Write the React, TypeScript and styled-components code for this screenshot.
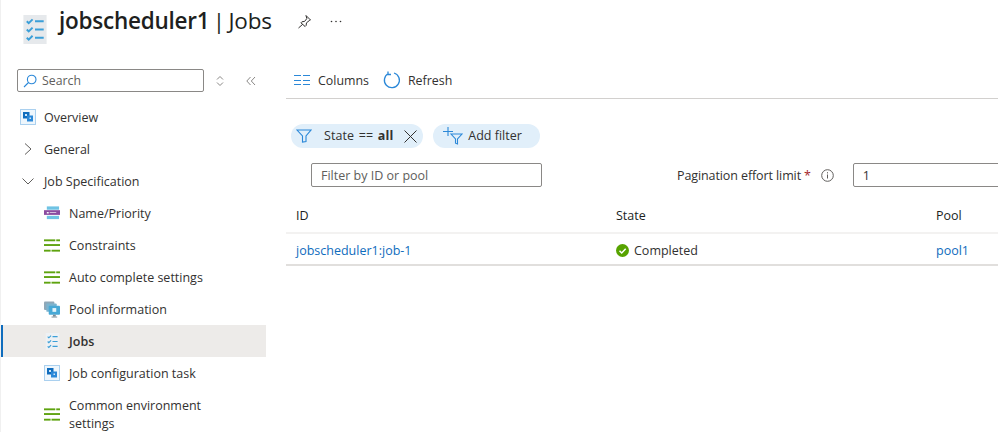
import React from 'react';
import styled, { createGlobalStyle } from 'styled-components';

const GlobalStyle = createGlobalStyle`
  html, body {
    margin: 0;
    padding: 0;
    background: #fff;
    overflow: hidden;
  }
  body {
    font-family: "Open Sans", "Noto Sans", "Liberation Sans", sans-serif;
    color: #323130;
  }
  * {
    box-sizing: border-box;
  }
`;

const Page = styled.div`
  width: 998px;
  height: 432px;
  overflow: hidden;
  display: flex;
  flex-direction: column;
  border-left: 1px solid #f0f0f0;
`;

const Header = styled.header`
  height: 63px;
  display: flex;
  align-items: flex-start;
  padding: 15px 0 0 22px;
`;

const Title = styled.h1`
  margin: -10px 0 0 12px;
  font-size: 22.5px;
  line-height: 32px;
  font-weight: 400;
  color: #201f1e;
  letter-spacing: -0.25px;
  word-spacing: -2px;
  white-space: nowrap;

  strong {
    font-weight: 600;
  }
`;

const HeaderAction = styled.span<{ $gap: number }>`
  display: flex;
  margin-left: ${(p) => p.$gap}px;
  margin-top: -1px;
`;

const Body = styled.div`
  flex: 1;
  display: flex;
  min-height: 0;
`;

const Sidebar = styled.nav`
  width: 265px;
  flex: none;
  display: flex;
  flex-direction: column;
`;

const SearchRow = styled.div`
  height: 38px;
  flex: none;
  display: flex;
  align-items: flex-start;
  padding: 6px 0 0 16px;
`;

const SearchBox = styled.div`
  width: 187px;
  height: 23px;
  display: flex;
  align-items: center;
  gap: 5px;
  padding-left: 5px;
  border: 1px solid #8a8886;
  border-radius: 2px;
  font-size: 12.3px;
  color: #605e5c;
`;

const SearchTool = styled.span<{ $gap: number }>`
  display: flex;
  height: 23px;
  align-items: center;
  margin-left: ${(p) => p.$gap}px;
`;

const NavRow = styled.div<{ $indent: number; $gap?: number; $active?: boolean }>`
  height: 32px;
  flex: none;
  display: flex;
  align-items: center;
  gap: ${(p) => p.$gap ?? 8}px;
  padding-left: ${(p) => p.$indent}px;
  font-size: 12.5px;
  font-weight: ${(p) => (p.$active ? 600 : 400)};
  background: ${(p) => (p.$active ? '#edebe9' : 'transparent')};
  box-shadow: ${(p) => (p.$active ? 'inset 2px 0 0 #0f6cbd' : 'none')};
  line-height: 18px;
`;

const NavTall = styled(NavRow)`
  height: 50px;
`;

const NavLabel = styled.span`
  padding-top: 2px;
`;

const NavIcon = styled.span`
  width: 16px;
  height: 16px;
  flex: none;
  display: flex;
  align-items: center;
  justify-content: center;
`;

const Main = styled.main`
  flex: 1;
  min-width: 0;
  padding-left: 20px;
  display: flex;
  flex-direction: column;
`;

const Toolbar = styled.div`
  height: 36px;
  flex: none;
  display: flex;
  align-items: flex-start;
  padding: 5px 0 0 8px;
  border-bottom: 1px solid #d2d0ce;
  font-size: 12.4px;
`;

const ToolButton = styled.div<{ $gap: number }>`
  display: flex;
  align-items: center;
  height: 24px;
  gap: ${(p) => p.$gap}px;
  margin-right: 14px;
`;

const Chips = styled.div`
  display: flex;
  gap: 10px;
  margin: 25px 0 0 5px;
`;

const Chip = styled.div<{ $pad: string }>`
  height: 24px;
  border-radius: 12px;
  background: #e1effa;
  display: flex;
  align-items: center;
  font-size: 12.5px;
  padding: ${(p) => p.$pad};

  b {
    font-weight: 700;
  }
`;

const ChipLabel = styled.span<{ $gap: number; $spaced?: boolean }>`
  margin-left: ${(p) => p.$gap}px;
  padding-bottom: 2px;
  word-spacing: ${(p) => (p.$spaced ? 1.2 : 0)}px;
  letter-spacing: ${(p) => (p.$spaced ? 0.1 : 0)}px;
`;

const FilterRow = styled.div`
  display: flex;
  align-items: center;
  margin: 15px 0 0 25px;
  font-size: 12.5px;
`;

const TextField = styled.div<{ $width: number; $muted?: boolean }>`
  width: ${(p) => p.$width}px;
  height: 24px;
  flex: none;
  display: flex;
  align-items: center;
  padding-left: 9px;
  border: 1px solid #8a8886;
  border-radius: 2px;
  color: ${(p) => (p.$muted ? '#605e5c' : '#323130')};
`;

const PaginationLabel = styled.span`
  margin-left: 135px;
  white-space: nowrap;
  letter-spacing: -0.1px;
`;

const Required = styled.span`
  color: #a4262c;
  margin-left: 3px;
`;

const InfoIcon = styled.span`
  display: flex;
  margin: 0 19px 0 10px;
`;

const Row = styled.div<{ $height: number; $line: string }>`
  height: ${(p) => p.$height}px;
  display: grid;
  grid-template-columns: 320px 320px 1fr;
  align-items: center;
  padding-left: 10px;
  border-bottom: 2px solid ${(p) => p.$line};
  font-size: 12.5px;
`;

const HeadRow = styled(Row)`
  margin-top: 14px;
  padding-bottom: 2px;
  color: #201f1e;
  font-weight: 500;
`;

const DataRow = styled(Row)`
  padding-top: 2px;
`;

const CellLink = styled.a`
  color: #0f6cbd;
  font-weight: 500;
`;

const StateCell = styled.div`
  display: flex;
  align-items: center;
  gap: 5px;
`;

const ChecklistIcon = ({ size, bg }: { size: [number, number]; bg: string }) => (
  <svg width={size[0]} height={size[1]} viewBox="0 0 24 30">
    <rect width="24" height="30" fill={bg} />
    <g fill="none" stroke="#3b9fd8" strokeWidth="2">
      <path d="M3.500 6.500l2 2 4-4M3.500 15l2 2 4-4M3.500 23.500l2 2 4-4" />
      <path d="M12 6.500h9M12 15h9M12 23.500h9" />
    </g>
  </svg>
);

const ServiceIcon = () => (
  <svg width="16" height="16" viewBox="0 0 16 16">
    <rect x="0.500" y="0.500" width="15" height="15" fill="#eef6fc" stroke="#5ea7e0" strokeDasharray="1 1" />
    <rect x="3" y="3" width="6.500" height="6.500" fill="#0f6cbd" />
    <rect x="7" y="6.500" width="6" height="6" fill="#2b88d8" />
    <rect x="5" y="5" width="2" height="2" fill="#cfe6f8" />
    <rect x="9.500" y="8.500" width="1.500" height="1.500" fill="#cfe6f8" />
  </svg>
);

const LinesIcon = () => (
  <svg width="17" height="13" viewBox="0 0 17 13">
    <g fill="#5ea30f">
      <rect y="0" width="12" height="2" />
      <rect x="13" y="0" width="4" height="2" />
      <rect y="5" width="17" height="2" />
      <rect y="11" width="7" height="2" />
      <rect x="8" y="11" width="9" height="2" />
    </g>
  </svg>
);

const NamePriorityIcon = () => (
  <svg width="17" height="14" viewBox="0 0 17 14">
    <rect x="3" y="0" width="13" height="3.500" fill="#6fc3e4" />
    <rect x="0" y="4" width="17" height="5" fill="#8a4ba0" />
    <rect x="3" y="10" width="13" height="3.500" fill="#6fc3e4" />
    <rect x="3" y="6" width="2" height="1.500" fill="#fff" />
    <rect x="6" y="6" width="7" height="1" fill="#d8c4e0" />
  </svg>
);

const PoolIcon = () => (
  <svg width="17" height="17" viewBox="0 0 17 17">
    <rect x="0" y="0" width="11" height="9" rx="1" fill="#8fa8b8" />
    <rect x="2.500" y="2" width="11" height="9" rx="1" fill="#7cb4cf" />
    <rect x="5" y="4.500" width="12" height="9.500" rx="1" fill="#48a9d6" />
    <rect x="9.500" y="14" width="3" height="2" fill="#7a8b96" />
    <rect x="8" y="16" width="6" height="1" fill="#7a8b96" />
    <rect x="9" y="7" width="4" height="4" fill="#e6f4fb" />
  </svg>
);

const StrokeIcon = ({ w, h, color = '#605e5c', sw = 1, d }: { w: number; h: number; color?: string; sw?: number; d: string }) => (
  <svg width={w} height={h} viewBox={`0 0 ${w} ${h}`} fill="none" stroke={color} strokeWidth={sw}>
    <path d={d} />
  </svg>
);

const navItems = [
  { label: 'Name/Priority', icon: <NamePriorityIcon /> },
  { label: 'Constraints', icon: <LinesIcon /> },
  { label: 'Auto complete settings', icon: <LinesIcon /> },
  { label: 'Pool information', icon: <PoolIcon /> },
  { label: 'Jobs', icon: <ChecklistIcon size={[15, 17]} bg="#eef1f4" />, active: true },
  { label: 'Job configuration task', icon: <ServiceIcon /> },
];

export default function App() {
  return (
    <>
      <GlobalStyle />
      <Page>
        <Header>
          <ChecklistIcon size={[24, 29]} bg="#e6e9ec" />
          <Title>
            <strong>jobscheduler1</strong> | Jobs
          </Title>
          <HeaderAction $gap={25}>
            <StrokeIcon w={15} h={15} color="#323130" d="M9 1.500l4.500 4.500-1.200.6-2.800 2.200-.4 2.700-1 1L3.900 8.800l1-1 2.700-.4 2.200-2.800zM5.800 10.200L1.500 14" />
          </HeaderAction>
          <HeaderAction $gap={18}>
            <svg width="12" height="15" viewBox="0 0 12 15" fill="#323130">
              <circle cx="1.500" cy="7.500" r="0.800" />
              <circle cx="6" cy="7.500" r="0.800" />
              <circle cx="10.500" cy="7.500" r="0.800" />
            </svg>
          </HeaderAction>
        </Header>
        <Body>
          <Sidebar>
            <SearchRow>
              <SearchBox>
                <StrokeIcon w={14} h={14} color="#2b88d8" sw={1.1} d="M13 5.500a4.300 4.300 0 1 1-8.600 0 4.300 4.300 0 0 1 8.600 0zM5.500 8.500L1 13" />
                Search
              </SearchBox>
              <SearchTool $gap={12}>
                <StrokeIcon w={8} h={12} color="#8a8886" d="M1 4.500L4 1.500l3 3M1 7.500l3 3 3-3" />
              </SearchTool>
              <SearchTool $gap={22}>
                <StrokeIcon w={10} h={10} color="#8a8886" d="M4.500 1L.8 5l3.700 4M9 1L5.300 5 9 9" />
              </SearchTool>
            </SearchRow>
            <NavRow $indent={19}>
              <NavIcon>
                <ServiceIcon />
              </NavIcon>
              <NavLabel>Overview</NavLabel>
            </NavRow>
            <NavRow $indent={19}>
              <NavIcon>
                <StrokeIcon w={10} h={14} color="#605e5c" d="M2 1.500L8 7l-6 5.500" />
              </NavIcon>
              <NavLabel>General</NavLabel>
            </NavRow>
            <NavRow $indent={19}>
              <NavIcon>
                <StrokeIcon w={14} h={9} color="#605e5c" d="M1.500 1.500L7 7l5.500-5.500" />
              </NavIcon>
              <NavLabel>Job Specification</NavLabel>
            </NavRow>
            {navItems.map((item) => (
              <NavRow key={item.label} $indent={43} $gap={9} $active={item.active}>
                <NavIcon>{item.icon}</NavIcon>
                <NavLabel>{item.label}</NavLabel>
              </NavRow>
            ))}
            <NavTall $indent={43} $gap={9}>
              <NavIcon>
                <LinesIcon />
              </NavIcon>
              <NavLabel>
                Common environment
                <br />
                settings
              </NavLabel>
            </NavTall>
          </Sidebar>
          <Main>
            <Toolbar>
              <ToolButton $gap={8}>
                <StrokeIcon w={16} h={12} color="#2b88d8" sw={1.2} d="M0 1.500h7M9 1.500h7M0 6.500h7M9 6.500h7M0 10.500h7M9 10.500h7" />
                Columns
              </ToolButton>
              <ToolButton $gap={7}>
                <StrokeIcon w={18} h={18} color="#2b88d8" sw={1.3} d="M5.500 2.500A7.500 7.500 0 1 0 11 2M5 .5v3h3" />
                Refresh
              </ToolButton>
            </Toolbar>
            <Chips>
              <Chip $pad="0 6px 0 5px">
                <StrokeIcon w={16} h={14} color="#2b88d8" sw={1.1} d="M1 1h14L10 7v5.500L6.500 13V7z" />
                <ChipLabel $gap={12} $spaced>
                  State == <b>all</b>
                </ChipLabel>
                <StrokeIcon w={24} h={13} color="#323130" d="M11.500 .5l12 12M23.500 .5l-12 12" />
              </Chip>
              <Chip $pad="0 18px 0 10px">
                <StrokeIcon w={20} h={18} color="#2b88d8" sw={1.1} d="M5 0v9M0 4.500h10M8 7h11l-4.500 5v5l-2-.8V12z" />
                <ChipLabel $gap={5}>Add filter</ChipLabel>
              </Chip>
            </Chips>
            <FilterRow>
              <TextField $width={231} $muted>
                Filter by ID or pool
              </TextField>
              <PaginationLabel>
                Pagination effort limit
                <Required>*</Required>
              </PaginationLabel>
              <InfoIcon>
                <svg width="13" height="13" viewBox="0 0 13 13" fill="none" stroke="#605e5c">
                  <circle cx="6.500" cy="6.500" r="5.800" />
                  <path d="M6.500 5.500v4M6.500 3.200v1.200" />
                </svg>
              </InfoIcon>
              <TextField $width={160}>1</TextField>
            </FilterRow>
            <HeadRow $height={33} $line="#f3f2f1">
              <span>ID</span>
              <span>State</span>
              <span>Pool</span>
            </HeadRow>
            <DataRow $height={32} $line="#e1dfdd">
              <CellLink>jobscheduler1:job-1</CellLink>
              <StateCell>
                <svg width="13" height="13" viewBox="0 0 13 13">
                  <circle cx="6.500" cy="6.500" r="6.500" fill="#57a300" />
                  <path d="M3.500 6.800l2.200 2.200 4-4.300" fill="none" stroke="#fff" strokeWidth="1.500" />
                </svg>
                Completed
              </StateCell>
              <CellLink>pool1</CellLink>
            </DataRow>
          </Main>
        </Body>
      </Page>
    </>
  );
}
